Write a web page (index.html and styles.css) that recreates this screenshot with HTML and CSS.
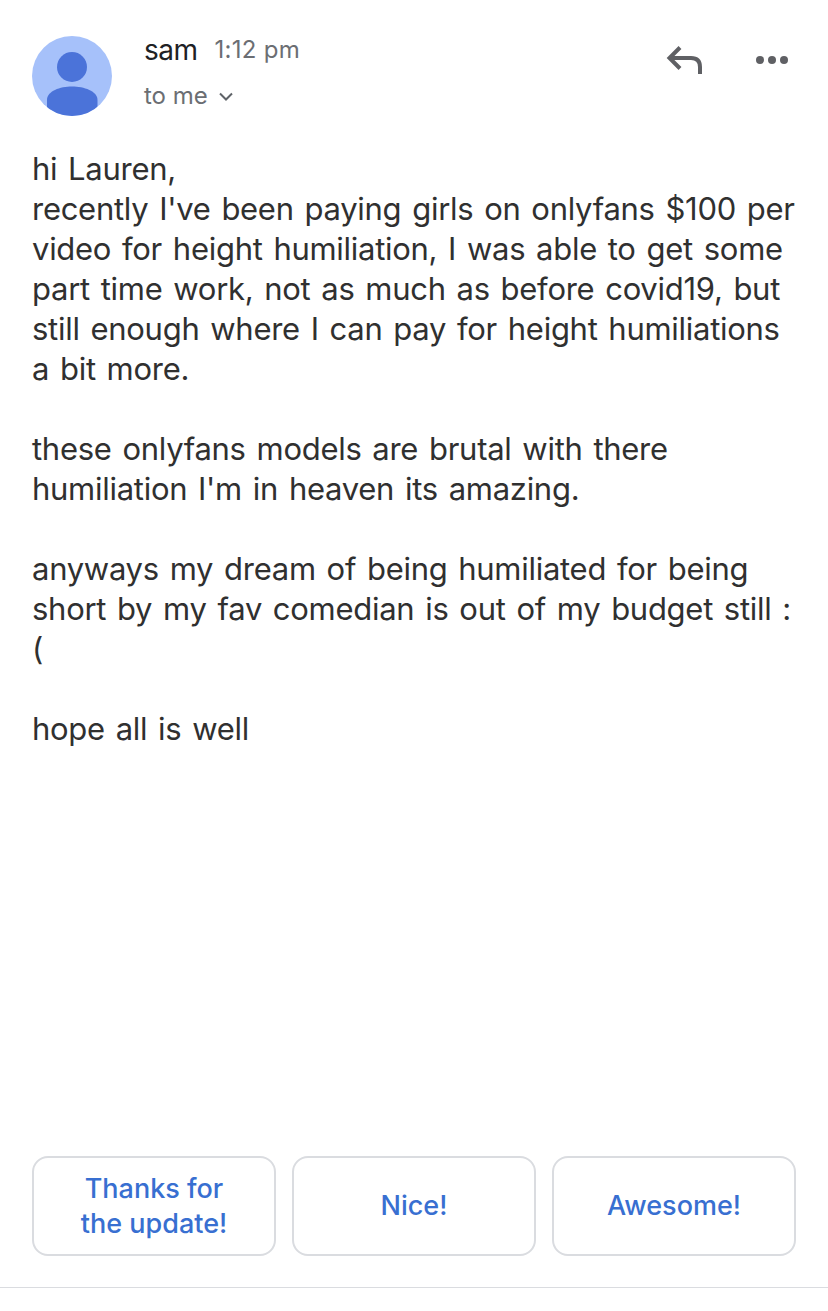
FILE: index.html
```
<!DOCTYPE html>
<html lang="en">
	<head>
		<meta charset="UTF-8">
		<title>Message from sam</title>
		<meta name="viewport" content="width=device-width, initial-scale=1.0">
		<link rel="stylesheet" href="styles.css">
	</head>
	<body>
		<header>
			<svg class="avatar" viewBox="0 0 80 80">
				<clipPath id="round"><circle cx="40" cy="40" r="40"/></clipPath>
				<g clip-path="url(#round)">
					<rect width="80" height="80" fill="#a6c1fa"/>
					<circle cx="40" cy="31" r="15" fill="#4b73d9"/>
					<path d="M15 80V64C15 55 28 50.500 40 50.500S65.500 55 65.500 64V80Z" fill="#4b73d9"/>
				</g>
			</svg>
			<div class="sender">
				<div class="from"><span class="name">sam</span><span class="time">1:12 pm</span></div>
				<div class="to">
					<span>to me</span>
					<svg class="chevron" viewBox="0 0 14 9"><path d="M1 1.500L7 7.500L13 1.500"/></svg>
				</div>
			</div>
			<svg class="reply" viewBox="0 0 38 30"><path d="M14 2.500L3.500 13L14 23.500M3 13H25Q34 13 34 22V29"/></svg>
			<svg class="more" viewBox="0 0 32 8"><circle cx="4" cy="4" r="4"/><circle cx="16" cy="4" r="4"/><circle cx="28" cy="4" r="4"/></svg>
		</header>
		<main>
			<p>hi Lauren,<br>
			recently I've been paying girls on onlyfans $100 per<br>
			video for height humiliation, I was able to get some<br>
			part time work, not as much as before covid19, but<br>
			still enough where I can pay for height humiliations<br>
			a bit more.</p>
			<p>these onlyfans models are brutal with there<br>
			humiliation I'm in heaven its amazing.</p>
			<p>anyways my dream of being humiliated for being<br>
			short by my fav comedian is out of my budget still :<br>
			(</p>
			<p>hope all is well</p>
		</main>
		<footer>
			<button type="button">Thanks for<br>the update!</button>
			<button type="button">Nice!</button>
			<button type="button">Awesome!</button>
		</footer>
	</body>
</html>
```
FILE: styles.css
```
* {
	box-sizing: border-box;
}
body {
	display: flex;
	flex-direction: column;
	height: 1311px;
	margin: 0;
	padding-bottom: 23px;
	background-color: #fff;
	font-family: Inter, sans-serif;
}
header {
	display: flex;
	height: 149px;
	padding: 36px 40px 0 32px;
}
.avatar {
	width: 80px;
	height: 80px;
}
.sender {
	flex: 1;
	margin-left: 32px;
}
.from {
	display: flex;
	height: 45px;
	line-height: 28px;
}
.name {
	color: #202124;
	font-size: 28px;
	letter-spacing: -0.5px;
}
.time {
	margin-left: 17px;
	color: #6b6e73;
	font-size: 24px;
	letter-spacing: 0.3px;
}
.to {
	display: flex;
	align-items: center;
	height: 28px;
	color: #6b6e73;
	font-size: 24px;
}
.chevron {
	width: 14px;
	height: 9px;
	margin: 2px 0 0 11px;
}
.chevron path {
	fill: none;
	stroke: #5f6368;
	stroke-width: 2;
}
.reply {
	width: 38px;
	height: 30px;
	margin-top: 9px;
}
.reply path {
	fill: none;
	stroke: #5f6064;
	stroke-width: 4;
}
.more {
	width: 32px;
	height: 8px;
	margin: 20px 0 0 52px;
	fill: #5f6064;
}
main {
	flex: 1;
	padding: 0 32px;
	color: #303030;
	font-size: 31px;
	line-height: 40px;
	letter-spacing: -0.28px;
	word-spacing: 2.4px;
	white-space: nowrap;
}
p {
	margin: 0 0 40px;
}
footer {
	display: grid;
	grid-template-columns: repeat(3, 244px);
	gap: 16px;
	height: 132px;
	padding: 0 32px 31px;
	border-bottom: 1px solid #dadce0;
}
button {
	padding: 0 0 1px;
	border: 2px solid #dadce0;
	border-radius: 16px;
	background-color: #fff;
	color: #386fd1;
	font-family: Inter, sans-serif;
	font-size: 27px;
	font-weight: 500;
	line-height: 35px;
}
```
